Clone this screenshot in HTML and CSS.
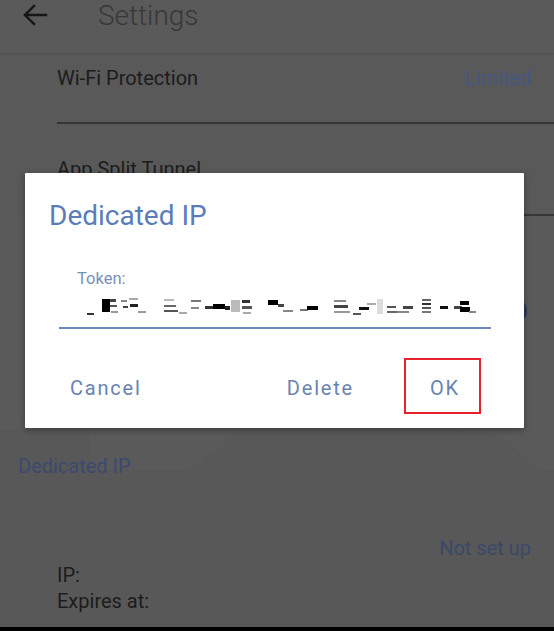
FILE: index.html
```html
<!DOCTYPE html>
<html lang="en">
<head>
<meta charset="utf-8">
<title>Settings – Dedicated IP</title>
<link rel="stylesheet" href="styles.css">
</head>
<body>
<div class="screen">
  <header class="appbar">
    <svg class="back" width="26" height="22" viewBox="0 0 26 22" aria-hidden="true">
      <path d="M24 11H3 M12 2 L3 11 L12 20" fill="none" stroke="#161616" stroke-width="2.4" stroke-linecap="square"/>
    </svg>
    <h1 class="title">Settings</h1>
  </header>

  <div class="list">
    <div class="item item-wifi">
      <span class="label">Wi-Fi Protection</span>
      <span class="value">Limited</span>
    </div>
    <div class="item item-split">
      <span class="label">App Split Tunnel</span>
    </div>
    <div class="item item-toggle">
      <span class="toggle"></span>
    </div>
    <section class="dip">
      <h2 class="dip-title">Dedicated IP</h2>
      <div class="dip-status">Not set up</div>
      <div class="dip-line">IP:</div>
      <div class="dip-line">Expires at:</div>
    </section>
  </div>

  <div class="navbar"></div>

  <div class="dialog">
    <h3 class="dialog-title">Dedicated IP</h3>
    <div class="field">
      <div class="field-label">Token:</div>
      <svg class="token" width="394" height="23" viewBox="0 0 394 23" aria-hidden="true">
        <rect x="4" y="18" width="7" height="2" fill="#333"/>
        <rect x="19" y="4" width="8" height="13" fill="#000"/>
        <rect x="27" y="4" width="6" height="3" fill="#444"/>
        <rect x="27" y="10" width="7" height="2" fill="#555"/>
        <rect x="28" y="16" width="7" height="2" fill="#999"/>
        <rect x="38" y="5" width="6" height="2" fill="#888"/>
        <rect x="40" y="11" width="5" height="2" fill="#444"/>
        <rect x="46" y="3" width="9" height="2" fill="#aaa"/>
        <rect x="47" y="9" width="8" height="3" fill="#222"/>
        <rect x="55" y="16" width="8" height="2" fill="#999"/>
        <rect x="81" y="4" width="10" height="2" fill="#bbb"/>
        <rect x="81" y="10" width="12" height="2" fill="#666"/>
        <rect x="81" y="15" width="14" height="2" fill="#555"/>
        <rect x="96" y="17" width="8" height="2" fill="#aaa"/>
        <rect x="108" y="5" width="10" height="2" fill="#777"/>
        <rect x="108" y="12" width="8" height="2" fill="#888"/>
        <rect x="122" y="11" width="8" height="3" fill="#333"/>
        <rect x="130" y="9" width="12" height="5" fill="#000"/>
        <rect x="142" y="11" width="5" height="4" fill="#222"/>
        <rect x="148" y="5" width="9" height="12" fill="#bbb"/>
        <rect x="159" y="5" width="8" height="3" fill="#333"/>
        <rect x="159" y="11" width="10" height="3" fill="#555"/>
        <rect x="160" y="17" width="8" height="2" fill="#aaa"/>
        <rect x="185" y="5" width="10" height="5" fill="#000"/>
        <rect x="195" y="9" width="6" height="3" fill="#444"/>
        <rect x="200" y="15" width="10" height="2" fill="#888"/>
        <rect x="217" y="14" width="8" height="2" fill="#777"/>
        <rect x="224" y="11" width="11" height="4" fill="#000"/>
        <rect x="251" y="5" width="12" height="2" fill="#888"/>
        <rect x="251" y="10" width="14" height="3" fill="#444"/>
        <rect x="251" y="16" width="16" height="2" fill="#999"/>
        <rect x="270" y="18" width="8" height="2" fill="#555"/>
        <rect x="276" y="12" width="10" height="3" fill="#111"/>
        <rect x="284" y="8" width="9" height="2" fill="#aaa"/>
        <rect x="294" y="4" width="6" height="15" fill="#ddd"/>
        <rect x="304" y="11" width="9" height="2" fill="#555"/>
        <rect x="304" y="16" width="10" height="2" fill="#666"/>
        <rect x="314" y="16" width="12" height="2" fill="#888"/>
        <rect x="320" y="11" width="10" height="3" fill="#444"/>
        <rect x="339" y="4" width="9" height="2" fill="#666"/>
        <rect x="339" y="8" width="9" height="2" fill="#333"/>
        <rect x="339" y="12" width="9" height="2" fill="#555"/>
        <rect x="339" y="16" width="9" height="2" fill="#777"/>
        <rect x="357" y="11" width="8" height="3" fill="#111"/>
        <rect x="371" y="11" width="8" height="3" fill="#444"/>
        <rect x="377" y="6" width="9" height="4" fill="#000"/>
        <rect x="377" y="12" width="10" height="5" fill="#000"/>
        <rect x="386" y="16" width="7" height="2" fill="#888"/>
      </svg>
    </div>
    <div class="actions">
      <span class="btn btn-cancel">Cancel</span>
      <span class="btn btn-delete">Delete</span>
      <span class="btn btn-ok">OK</span>
    </div>
  </div>
</div>
</body>
</html>
```

FILE: styles.css
```css
* {
  box-sizing: border-box;
}

html, body {
  margin: 0;
  padding: 0;
}

body {
  width: 554px;
  height: 631px;
  overflow: hidden;
  background: #595959;
  font-family: Roboto, "Liberation Sans", sans-serif;
}

.screen {
  position: relative;
  width: 554px;
  height: 631px;
  display: flex;
  flex-direction: column;
}

/* App bar */
.appbar {
  height: 53px;
  display: flex;
  align-items: flex-start;
  background: #5a5a5a;
  box-shadow: 0 1px 2px rgba(0, 0, 0, 0.12);
  position: relative;
  z-index: 1;
}

.back {
  margin: 4px 0 0 22px;
  flex: none;
}

.title {
  margin: 1px 0 0 50px;
  font-size: 28px;
  line-height: 30px;
  font-weight: 300;
  color: #383838;
}

/* List */
.list {
  flex: 1;
  display: flex;
  flex-direction: column;
}

.item {
  display: flex;
  align-items: flex-start;
  justify-content: space-between;
  margin-left: 57px;
  padding-right: 23px;
  font-size: 20px;
  line-height: 24px;
  color: #1c1c1c;
  border-bottom: 2px solid #363636;
}

.item-wifi {
  padding-top: 13px;
  height: 71px;
}

.item-split {
  padding-top: 33px;
  height: 92px;
}

.value {
  color: #475782;
}

.item-toggle {
  border-bottom: none;
  margin-left: 0;
  height: 189px;
  padding-right: 27px;
  padding-top: 82px;
  justify-content: flex-end;
  background: #5a5a5a;
}

.toggle {
  display: block;
  width: 26px;
  height: 26px;
  border-radius: 50%;
  background: #2b3a5a;
}

/* Dedicated IP section */
.dip {
  flex: 1;
  padding: 49px 23px 0 18px;
  background-color: #585858;
  background-image: url("data:image/svg+xml,%3Csvg xmlns='http://www.w3.org/2000/svg' width='554' height='100'%3E%3Cpolygon points='0,0 554,0 554,65 540,65 500,30 450,25 450,0 240,0 240,25 190,65 90,65 90,25 0,25' fill='%235a5a5a'/%3E%3C/svg%3E");
  background-repeat: no-repeat;
  font-size: 20px;
  color: #1c1c1c;
}

.dip-title {
  margin: 0;
  font-size: 20px;
  line-height: 24px;
  font-weight: 400;
  color: #3c4a6e;
}

.dip-status {
  margin-top: 58px;
  line-height: 24px;
  text-align: right;
  color: #3b4869;
}

.dip-line {
  margin-left: 39px;
  line-height: 26px;
}

.dip-status + .dip-line {
  margin-top: 2px;
}

.navbar {
  height: 4px;
  background: #000;
  flex: none;
}

/* Dialog (overlay) */
.dialog {
  position: absolute;
  left: 25px;
  top: 173px;
  width: 499px;
  height: 255px;
  background: #fff;
  border-radius: 1px;
  box-shadow: 0 2px 6px rgba(0, 0, 0, 0.35);
  padding: 27px 43px 0 24px;
  display: flex;
  flex-direction: column;
}

.dialog-title {
  margin: 0;
  font-size: 28px;
  line-height: 32px;
  font-weight: 400;
  color: #5b7db7;
}

.field {
  margin: 37px 0 0 10px;
  width: 432px;
  border-bottom: 2px solid #6d88bd;
  padding-bottom: 9px;
}

.field-label {
  padding-left: 18px;
  font-size: 16.5px;
  line-height: 19px;
  color: #7790ba;
}

.token {
  display: block;
  margin: 7px 0 0 24px;
}

.actions {
  display: flex;
  align-items: flex-start;
  margin-top: 29px;
  padding-left: 21px;
}

.btn {
  font-size: 20px;
  line-height: 24px;
  letter-spacing: 1.8px;
  color: #6883b1;
}

.btn-cancel {
  padding-top: 18px;
}

.btn-delete {
  margin-left: auto;
  padding-top: 18px;
  margin-right: 50px;
}

.btn-ok {
  width: 77px;
  height: 56px;
  border: 2px solid #e8222c;
  padding: 16px 0 0 24px;
}
```
